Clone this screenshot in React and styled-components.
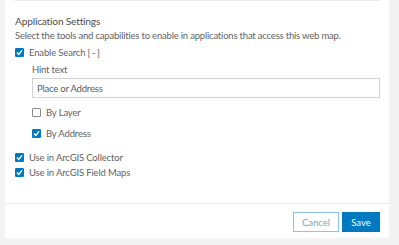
import React from "react";
import styled, { createGlobalStyle } from "styled-components";

const Global = createGlobalStyle`
  html, body { margin: 0; padding: 0; background: #f3f3f3; }
  body { font-family: Lato, "Open Sans", sans-serif; color: #636363; }
`;

const Panel = styled.div`
  margin-left: 5px;
  width: 384px;
  height: 238px;
  background: #ffffff;
  display: flex;
  flex-direction: column;
`;

const Content = styled.div`
  flex: 1;
  padding: 0 9px 0 10px;
`;

const Section = styled.div`
  border-top: 1px solid #ebebeb;
  display: flex;
  flex-direction: column;
`;

const Heading = styled.div`
  margin-top: 13px;
  font-size: 10.2px;
  letter-spacing: -0.2px;
  line-height: 15px;
  color: #505050;
`;

const Text = styled.div`
  font-size: 9.5px;
  letter-spacing: -0.2px;
  line-height: 14px;
  color: #636363;
`;

const Row = styled.label`
  display: flex;
  align-items: center;
  height: 15px;
  margin-top: ${(p) => p.$mt || 0}px;
  font-size: 9.5px;
  letter-spacing: -0.15px;
  color: #636363;
  gap: 5px;
`;

const Toggle = styled.span`
  margin-left: 2px;
  letter-spacing: 1.6px;
`;

const Box = styled.span`
  width: 9px;
  height: 9px;
  box-sizing: border-box;
  border-radius: 1px;
  display: inline-flex;
  align-items: center;
  justify-content: center;
  background: ${(p) => (p.$checked ? "#0079c1" : "#ffffff")};
  border: 1px solid ${(p) => (p.$checked ? "#0079c1" : "#8c8c8c")};
`;

const Nested = styled.div`
  margin-left: 17px;
  display: flex;
  flex-direction: column;
`;

const Label = styled(Text)`
  margin-top: 3px;
`;

const Input = styled.div`
  margin-top: 1px;
  height: 20px;
  box-sizing: border-box;
  border: 1px solid #d2d2d2;
  display: flex;
  align-items: center;
  padding-left: 4px;
  font-size: 9.5px;
  letter-spacing: -0.2px;
  color: #5c5c5c;
`;

const Footer = styled.div`
  border-top: 1px solid #eaeaea;
  height: 35px;
  box-sizing: border-box;
  display: flex;
  justify-content: flex-end;
  align-items: flex-start;
  padding: 8px 9px 0 0;
  gap: 3px;
`;

const Button = styled.button`
  height: 20px;
  box-sizing: border-box;
  padding: 0;
  width: ${(p) => p.$w}px;
  font-family: Lato, "Open Sans", sans-serif;
  font-size: 9.5px;
  cursor: pointer;
  background: ${(p) => (p.$primary ? "#0079c1" : "#ffffff")};
  color: ${(p) => (p.$primary ? "#ffffff" : "#7aa3c6")};
  border: 1px solid ${(p) => (p.$primary ? "#0079c1" : "#8ec2e6")};
`;

function Check({ checked }) {
  return (
    <Box $checked={checked}>
      {checked && (
        <svg width="7" height="7" viewBox="0 0 7 7">
          <path d="M1 3.6 L2.8 5.4 L6 1.4" fill="none" stroke="#fff" strokeWidth="1.4" />
        </svg>
      )}
    </Box>
  );
}

export default function App() {
  return (
    <>
      <Global />
      <Panel>
        <Content>
          <Section>
            <Heading>Application Settings</Heading>
            <Text>
              Select the tools and capabilities to enable in applications that access this web map.
            </Text>
            <Row $mt={2}>
              <Check checked />
              <span>
                Enable Search<Toggle>[-]</Toggle>
              </span>
            </Row>
            <Nested>
              <Label>Hint text</Label>
              <Input>Place or Address</Input>
              <Row $mt={7}>
                <Check checked={false} />
                By Layer
              </Row>
              <Row $mt={6}>
                <Check checked />
                By Address
              </Row>
            </Nested>
            <Row $mt={8.5}>
              <Check checked />
              Use in ArcGIS Collector
            </Row>
            <Row>
              <Check checked />
              Use in ArcGIS Field Maps
            </Row>
          </Section>
        </Content>
        <Footer>
          <Button $w={46}>Cancel</Button>
          <Button $w={38} $primary>Save</Button>
        </Footer>
      </Panel>
    </>
  );
}
